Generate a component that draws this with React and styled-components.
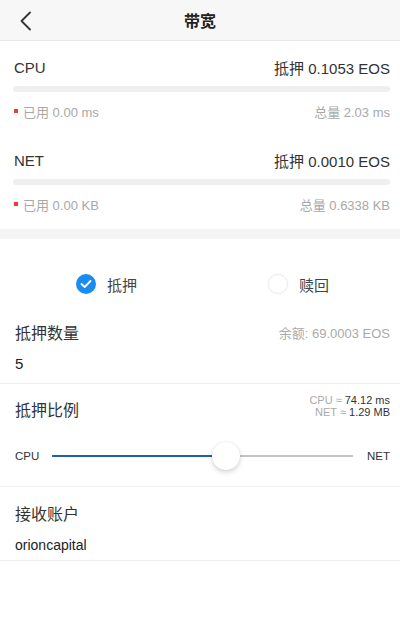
import React from "react";
import styled, { createGlobalStyle } from "styled-components";

const Global = createGlobalStyle`
  html, body { margin: 0; padding: 0; background: #ffffff; }
  body { font-family: "Liberation Sans", "Noto Sans CJK SC", sans-serif; color: #333; }
  * { box-sizing: border-box; }
`;

const Page = styled.div`
  width: 400px;
  height: 637px;
  background: #fff;
  display: flex;
  flex-direction: column;
`;

const Header = styled.div`
  height: 41px;
  background: #f7f7f7;
  border-bottom: 1px solid #e8e8e8;
  display: grid;
  grid-template-columns: 60px 1fr 60px;
  align-items: center;
`;

const Back = styled.div`
  display: flex;
  align-items: center;
  padding-left: 19px;
  padding-top: 1px;
`;

const Title = styled.div`
  text-align: center;
  font-family: "Noto Sans CJK SC", sans-serif;
  font-weight: 700;
  font-size: 16px;
  color: #222;
`;

const Block = styled.div`
  padding: ${(p) => p.$top}px 10px ${(p) => p.$bottom}px 14px;
  display: flex;
  flex-direction: column;
`;

const Line = styled.div`
  height: ${(p) => p.$h || 20}px;
  display: flex;
  align-items: center;
  justify-content: space-between;
  font-size: ${(p) => p.$size || 15}px;
  color: ${(p) => p.$color || "#333"};
  margin-top: ${(p) => p.$mt || 0}px;
`;

const Bar = styled.div`
  height: 6px;
  margin: ${(p) => p.$mt}px 0 0 -1px;
  background: #efefef;
  border-radius: 3px;
`;

const Used = styled.span`
  display: flex;
  align-items: center;
  gap: 5px;
`;

const Dot = styled.span`
  width: 4px;
  height: 4px;
  background: #e8402f;
`;

const Band = styled.div`
  height: 10px;
  background: #f4f4f5;
`;

const RadioRow = styled.div`
  padding-top: 34px;
  height: 56px;
  display: grid;
  grid-template-columns: 1fr 1fr;
`;

const RadioItem = styled.div`
  display: flex;
  align-items: center;
  gap: 11px;
  padding-left: ${(p) => p.$pl}px;
  font-family: "Noto Sans CJK SC", sans-serif;
  font-size: 15px;
  color: #444;
`;

const Circle = styled.span`
  width: 20px;
  height: 20px;
  border-radius: 50%;
  display: flex;
  align-items: center;
  justify-content: center;
  background: ${(p) => (p.$on ? "#1a8cf0" : "#fff")};
  border: ${(p) => (p.$on ? "none" : "1px solid #ececec")};
  box-shadow: ${(p) => (p.$on ? "none" : "0 0 2px rgba(0,0,0,0.05)")};
`;

const Section = styled.div`
  padding: ${(p) => p.$top}px 10px ${(p) => p.$bottom}px 15px;
  border-bottom: 1px solid #f0f0f0;
  display: flex;
  flex-direction: column;
`;

const Label = styled.span`
  font-family: "Noto Sans CJK SC", sans-serif;
  font-size: 16px;
  color: #333;
`;

const Hint = styled.span`
  font-size: 13px;
  color: #aaa;
`;

const Ratio = styled.div`
  display: flex;
  flex-direction: column;
  align-items: flex-end;
  font-size: 11px;
  line-height: 12.5px;
  margin-top: -6px;
  color: #333;
  & span { color: #aaa; }
`;

const SliderRow = styled.div`
  margin-top: 21px;
  height: 30px;
  display: flex;
  align-items: center;
  font-size: 11.5px;
  color: #333;
`;

const Track = styled.div`
  position: relative;
  flex: 1;
  height: 2px;
  margin: 0 14px 0 13px;
  background: #c4c4c4;
`;

const Fill = styled.div`
  position: absolute;
  left: 0;
  top: 0;
  height: 2px;
  background: #1f5fb8;
`;

const Thumb = styled.div`
  position: absolute;
  top: 50%;
  width: 28px;
  height: 28px;
  margin: -14px 0 0 -14px;
  border-radius: 50%;
  background: #fff;
  box-shadow: 0 2px 5px rgba(0,0,0,0.18), 0 0 1px rgba(0,0,0,0.1);
`;

const Value = styled.div`
  height: ${(p) => p.$h}px;
  margin-top: ${(p) => p.$mt}px;
  display: flex;
  align-items: center;
  font-size: ${(p) => p.$size}px;
  color: #222;
`;

function Resource({ name, stake, used, total, top, bottom }) {
  return (
    <Block $top={top} $bottom={bottom}>
      <Line $h={20} $size={15}>
        <span>{name}</span>
        <span>{stake}</span>
      </Line>
      <Bar $mt={9} />
      <Line $h={16} $size={13} $color="#a8a8a8" $mt={11}>
        <Used><Dot />{used}</Used>
        <span>{total}</span>
      </Line>
    </Block>
  );
}

export default function App() {
  const pct = 53;
  return (
    <Page>
      <Global />
      <Header>
        <Back>
          <svg width="14" height="20" viewBox="0 0 14 20">
            <path d="M11 1.5 L2.5 10 L11 18.5" fill="none" stroke="#333" strokeWidth="1.8" strokeLinecap="round" strokeLinejoin="round" />
          </svg>
        </Back>
        <Title>带宽</Title>
        <div />
      </Header>
      <Resource name="CPU" stake="抵押 0.1053 EOS" used="已用 0.00 ms" total="总量 2.03 ms" top={16} bottom={0} />
      <Resource name="NET" stake="抵押 0.0010 EOS" used="已用 0.00 KB" total="总量 0.6338 KB" top={31} bottom={17} />
      <Band />
      <RadioRow>
        <RadioItem $pl={76}>
          <Circle $on>
            <svg width="12" height="10" viewBox="0 0 12 10">
              <path d="M1.5 5 L4.7 8 L10.5 2" fill="none" stroke="#fff" strokeWidth="1.8" strokeLinecap="round" strokeLinejoin="round" />
            </svg>
          </Circle>
          抵押
        </RadioItem>
        <RadioItem $pl={68}>
          <Circle />
          赎回
        </RadioItem>
      </RadioRow>
      <Section $top={26} $bottom={9}>
        <Line $h={22}>
          <Label>抵押数量</Label>
          <Hint>余额: 69.0003 EOS</Hint>
        </Line>
        <Value $h={22} $mt={9} $size={15}>5</Value>
      </Section>
      <Section $top={14} $bottom={15}>
        <Line $h={22}>
          <Label>抵押比例</Label>
          <Ratio>
            <div><span>CPU ≈ </span>74.12 ms</div>
            <div><span>NET ≈ </span>1.29 MB</div>
          </Ratio>
        </Line>
        <SliderRow>
          <span>CPU</span>
          <Track>
            <Fill style={{ width: `${pct}%` }} />
            <Thumb style={{ left: `${pct + 4.7}%` }} />
          </Track>
          <span>NET</span>
        </SliderRow>
      </Section>
      <Section $top={15} $bottom={5}>
        <Line $h={22}>
          <Label>接收账户</Label>
        </Line>
        <Value $h={20} $mt={11} $size={14}>orioncapital</Value>
      </Section>
    </Page>
  );
}
